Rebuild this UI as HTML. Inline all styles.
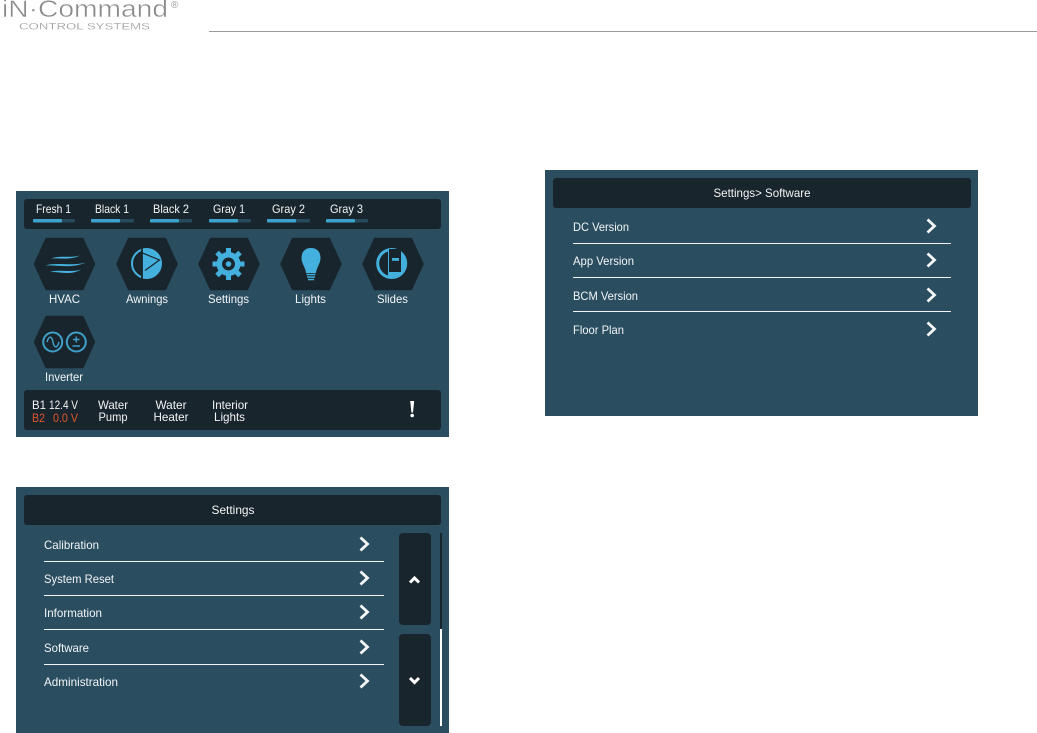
<!DOCTYPE html>
<html>
<head>
<meta charset="utf-8">
<style>
html,body{margin:0;padding:0;background:#fff;width:1037px;height:733px;overflow:hidden}
svg{display:block}
text{font-family:"Liberation Sans",sans-serif;font-size:12px;fill:#f2f5f6}
.c{text-anchor:middle}
.o{fill:#e0562b}
</style>
</head>
<body>
<svg width="1037" height="733" viewBox="0 0 1037 733" xmlns="http://www.w3.org/2000/svg">
<defs>
<polygon id="hex" points="-29.5,0 -18,-25 18,-25 29.5,0 18,25 -18,25" fill="#19252c" stroke="#19252c" stroke-width="2.5" stroke-linejoin="round"/>
<path id="chev" d="M-3.5,-6.5 L3.5,0 L-3.5,6.5" fill="none" stroke="#f4f6f7" stroke-width="2.8"/>
</defs>

<!-- logo -->
<text x="2" y="17" style="font-size:24px;fill:#8a8a8a;stroke:#fff;stroke-width:.45px" textLength="166" lengthAdjust="spacingAndGlyphs">iN·Command</text>
<text x="171" y="8" style="font-size:10px;fill:#9a9a9a">®</text>
<text x="19" y="29.500" style="font-size:9px;fill:#8f8f8f;stroke:#fff;stroke-width:.2px" textLength="131" lengthAdjust="spacingAndGlyphs">CONTROL SYSTEMS</text>
<rect x="209" y="31" width="828" height="1" fill="#9a9a9a"/>

<!-- panel 1 -->
<rect x="16" y="191" width="433" height="246" fill="#2a4d60"/>
<rect x="24" y="199" width="417" height="30" rx="3" fill="#19252c"/>
<text x="36" y="213" textLength="35" lengthAdjust="spacingAndGlyphs">Fresh 1</text>
<text x="95" y="213" textLength="34" lengthAdjust="spacingAndGlyphs">Black 1</text>
<text x="153" y="213" textLength="36" lengthAdjust="spacingAndGlyphs">Black 2</text>
<text x="213" y="213" textLength="32" lengthAdjust="spacingAndGlyphs">Gray 1</text>
<text x="272" y="213" textLength="33" lengthAdjust="spacingAndGlyphs">Gray 2</text>
<text x="330" y="213" textLength="33" lengthAdjust="spacingAndGlyphs">Gray 3</text>
<g fill="#264a5c">
<rect x="33" y="219" width="42" height="3.5" rx="1"/>
<rect x="91" y="219" width="43" height="3.5" rx="1"/>
<rect x="150" y="219" width="42" height="3.5" rx="1"/>
<rect x="209" y="219" width="42" height="3.5" rx="1"/>
<rect x="267" y="219" width="43" height="3.5" rx="1"/>
<rect x="326" y="219" width="42" height="3.5" rx="1"/>
</g>
<g fill="#3ea3cc">
<rect x="33" y="219" width="29" height="3.5" rx="1"/>
<rect x="91" y="219" width="29" height="3.5" rx="1"/>
<rect x="150" y="219" width="29" height="3.5" rx="1"/>
<rect x="209" y="219" width="29" height="3.5" rx="1"/>
<rect x="267" y="219" width="29" height="3.5" rx="1"/>
<rect x="326" y="219" width="29" height="3.5" rx="1"/>
</g>

<!-- HVAC -->
<use href="#hex" x="64.5" y="264"/>
<g fill="#46b2e0">
<path d="M51,258.500 C60,254.800 70,258.500 80,255.500 C70,260.500 60,257.800 51,258.500Z"/>
<path d="M45,265.500 C57,261.800 72,266.500 86,262.500 C72,268.800 57,264.800 45,265.500Z"/>
<path d="M50,272 C60,268.800 70,273 81,269.500 C70,276 60,271.500 50,272Z"/>
</g>
<!-- Awnings -->
<use href="#hex" x="147" y="264"/>
<circle cx="146.500" cy="263.500" r="14.500" fill="#19252c" stroke="#44b0de" stroke-width="2"/>
<path d="M142,248.700 A15.200,15.200 0 1 1 142,278.300 Z" fill="#44b0de"/>
<path d="M142,248.500 V278.500" stroke="#19252c" stroke-width="1.800"/>
<path d="M142.500,253 L159.500,260 L145,270.500" fill="none" stroke="#19252c" stroke-width="1.200"/>
<!-- Settings -->
<use href="#hex" x="229" y="264"/>
<g transform="translate(228.500,264)">
<circle r="9.200" fill="none" stroke="#44b0de" stroke-width="5.500"/>
<g stroke="#44b0de" stroke-width="5">
<path d="M0,-16 V-10"/><path d="M0,16 V10"/><path d="M-16,0 H-10"/><path d="M16,0 H10"/>
<path d="M-11.500,-11.500 L-7,-7"/><path d="M11.500,-11.500 L7,-7"/><path d="M-11.500,11.500 L-7,7"/><path d="M11.500,11.500 L7,7"/>
</g>
<circle r="2.800" fill="#44b0de"/>
</g>
<!-- Lights -->
<use href="#hex" x="311" y="264"/>
<path d="M311,248 C304,248 301.500,253 301.500,258 C301.500,264 305.500,267 306,273 H316 C316.500,267 320.500,264 320.500,258 C320.500,253 318,248 311,248Z" fill="#44b0de"/>
<path d="M306.500,274.500 H315.500 M307,277 H315 M308,279.500 H314" stroke="#44b0de" stroke-width="1.600"/>
<!-- Slides -->
<use href="#hex" x="393" y="264"/>
<circle cx="391.700" cy="263.500" r="14" fill="#19252c" stroke="#44b0de" stroke-width="3"/>
<path d="M388,248.900 A15,15 0 1 1 388,278.100 Z" fill="#44b0de"/>
<rect x="389" y="249" width="12" height="23" fill="#19252c"/>
<rect x="392" y="258" width="7" height="2.800" fill="#44b0de"/>

<text class="c" x="64.500" y="303" textLength="31" lengthAdjust="spacingAndGlyphs">HVAC</text>
<text class="c" x="147" y="303" textLength="42" lengthAdjust="spacingAndGlyphs">Awnings</text>
<text class="c" x="228.500" y="303" textLength="41" lengthAdjust="spacingAndGlyphs">Settings</text>
<text class="c" x="310.500" y="303" textLength="31" lengthAdjust="spacingAndGlyphs">Lights</text>
<text class="c" x="392.500" y="303" textLength="31" lengthAdjust="spacingAndGlyphs">Slides</text>

<!-- Inverter -->
<use href="#hex" x="64.500" y="342"/>
<circle cx="52.700" cy="342" r="9.500" fill="none" stroke="#3f9fc8" stroke-width="2"/>
<path d="M47,342 C49,335 52,336 53,342 C54,348 57,349 59,342" fill="none" stroke="#3f9fc8" stroke-width="1.500"/>
<circle cx="76.300" cy="342" r="9.500" fill="none" stroke="#3f9fc8" stroke-width="2"/>
<path d="M73,339.500 H79.500 M76.300,336.500 V342.500 M72.500,346 H80" stroke="#3f9fc8" stroke-width="1.500"/>
<text class="c" x="64" y="381" textLength="38" lengthAdjust="spacingAndGlyphs">Inverter</text>

<!-- bottom bar -->
<rect x="24" y="390" width="417" height="40" rx="3" fill="#19252c"/>
<text x="32" y="409" textLength="14" lengthAdjust="spacingAndGlyphs">B1</text>
<text x="49" y="409" textLength="29" lengthAdjust="spacingAndGlyphs">12.4 V</text>
<text class="o" x="32" y="422" textLength="13" lengthAdjust="spacingAndGlyphs">B2</text>
<text class="o" x="53" y="422" textLength="25" lengthAdjust="spacingAndGlyphs">0.0 V</text>
<text class="c" x="113" y="409" textLength="30" lengthAdjust="spacingAndGlyphs">Water</text>
<text class="c" x="113" y="421" textLength="29" lengthAdjust="spacingAndGlyphs">Pump</text>
<text class="c" x="171" y="409" textLength="31" lengthAdjust="spacingAndGlyphs">Water</text>
<text class="c" x="171" y="421" textLength="35" lengthAdjust="spacingAndGlyphs">Heater</text>
<text class="c" x="230" y="409" textLength="36" lengthAdjust="spacingAndGlyphs">Interior</text>
<text class="c" x="229.500" y="421" textLength="31" lengthAdjust="spacingAndGlyphs">Lights</text>
<path d="M410.200,401 L414.200,401 L413,412.500 L411.400,412.500Z" fill="#fff"/>
<circle cx="412.200" cy="415.500" r="1.800" fill="#fff"/>

<!-- panel 2 -->
<rect x="16" y="487" width="433" height="246" fill="#2a4d60"/>
<rect x="24" y="495" width="417" height="30" rx="3" fill="#19252c"/>
<text class="c" x="233" y="514" textLength="43" lengthAdjust="spacingAndGlyphs">Settings</text>
<text x="44" y="549" textLength="55" lengthAdjust="spacingAndGlyphs">Calibration</text>
<text x="44" y="583" textLength="70" lengthAdjust="spacingAndGlyphs">System Reset</text>
<text x="44" y="617" textLength="58" lengthAdjust="spacingAndGlyphs">Information</text>
<text x="44" y="652" textLength="45" lengthAdjust="spacingAndGlyphs">Software</text>
<text x="44" y="686" textLength="74" lengthAdjust="spacingAndGlyphs">Administration</text>
<g fill="#f2f5f6">
<rect x="44" y="561" width="340" height="1"/>
<rect x="44" y="595" width="340" height="1"/>
<rect x="44" y="629" width="340" height="1"/>
<rect x="44" y="664" width="340" height="1"/>
</g>
<use href="#chev" x="364" y="544"/>
<use href="#chev" x="364" y="578"/>
<use href="#chev" x="364" y="612"/>
<use href="#chev" x="364" y="647"/>
<use href="#chev" x="364" y="681"/>
<rect x="399" y="533" width="32" height="92" rx="4" fill="#19252c"/>
<rect x="399" y="634" width="32" height="92" rx="4" fill="#19252c"/>
<path d="M410,582.500 L414.500,578 L419,582.500" fill="none" stroke="#fff" stroke-width="3"/>
<path d="M410,678 L414.500,682.500 L419,678" fill="none" stroke="#fff" stroke-width="3"/>
<rect x="440" y="533" width="2" height="96" fill="#19252c"/>
<rect x="440" y="629" width="2" height="97" fill="#fff"/>

<!-- panel 3 -->
<rect x="545" y="170" width="433" height="246" fill="#2a4d60"/>
<rect x="553" y="178" width="418" height="30" rx="3" fill="#19252c"/>
<text class="c" x="762" y="197" textLength="97" lengthAdjust="spacingAndGlyphs">Settings&gt; Software</text>
<text x="573" y="231" textLength="56" lengthAdjust="spacingAndGlyphs">DC Version</text>
<text x="573" y="265" textLength="61" lengthAdjust="spacingAndGlyphs">App Version</text>
<text x="573" y="300" textLength="65" lengthAdjust="spacingAndGlyphs">BCM Version</text>
<text x="573" y="334" textLength="51" lengthAdjust="spacingAndGlyphs">Floor Plan</text>
<g fill="#f2f5f6">
<rect x="573" y="243" width="378" height="1"/>
<rect x="573" y="277" width="378" height="1"/>
<rect x="573" y="311" width="378" height="1"/>
</g>
<use href="#chev" x="931" y="226"/>
<use href="#chev" x="931" y="260"/>
<use href="#chev" x="931" y="295"/>
<use href="#chev" x="931" y="329"/>
</svg>
</body>
</html>
